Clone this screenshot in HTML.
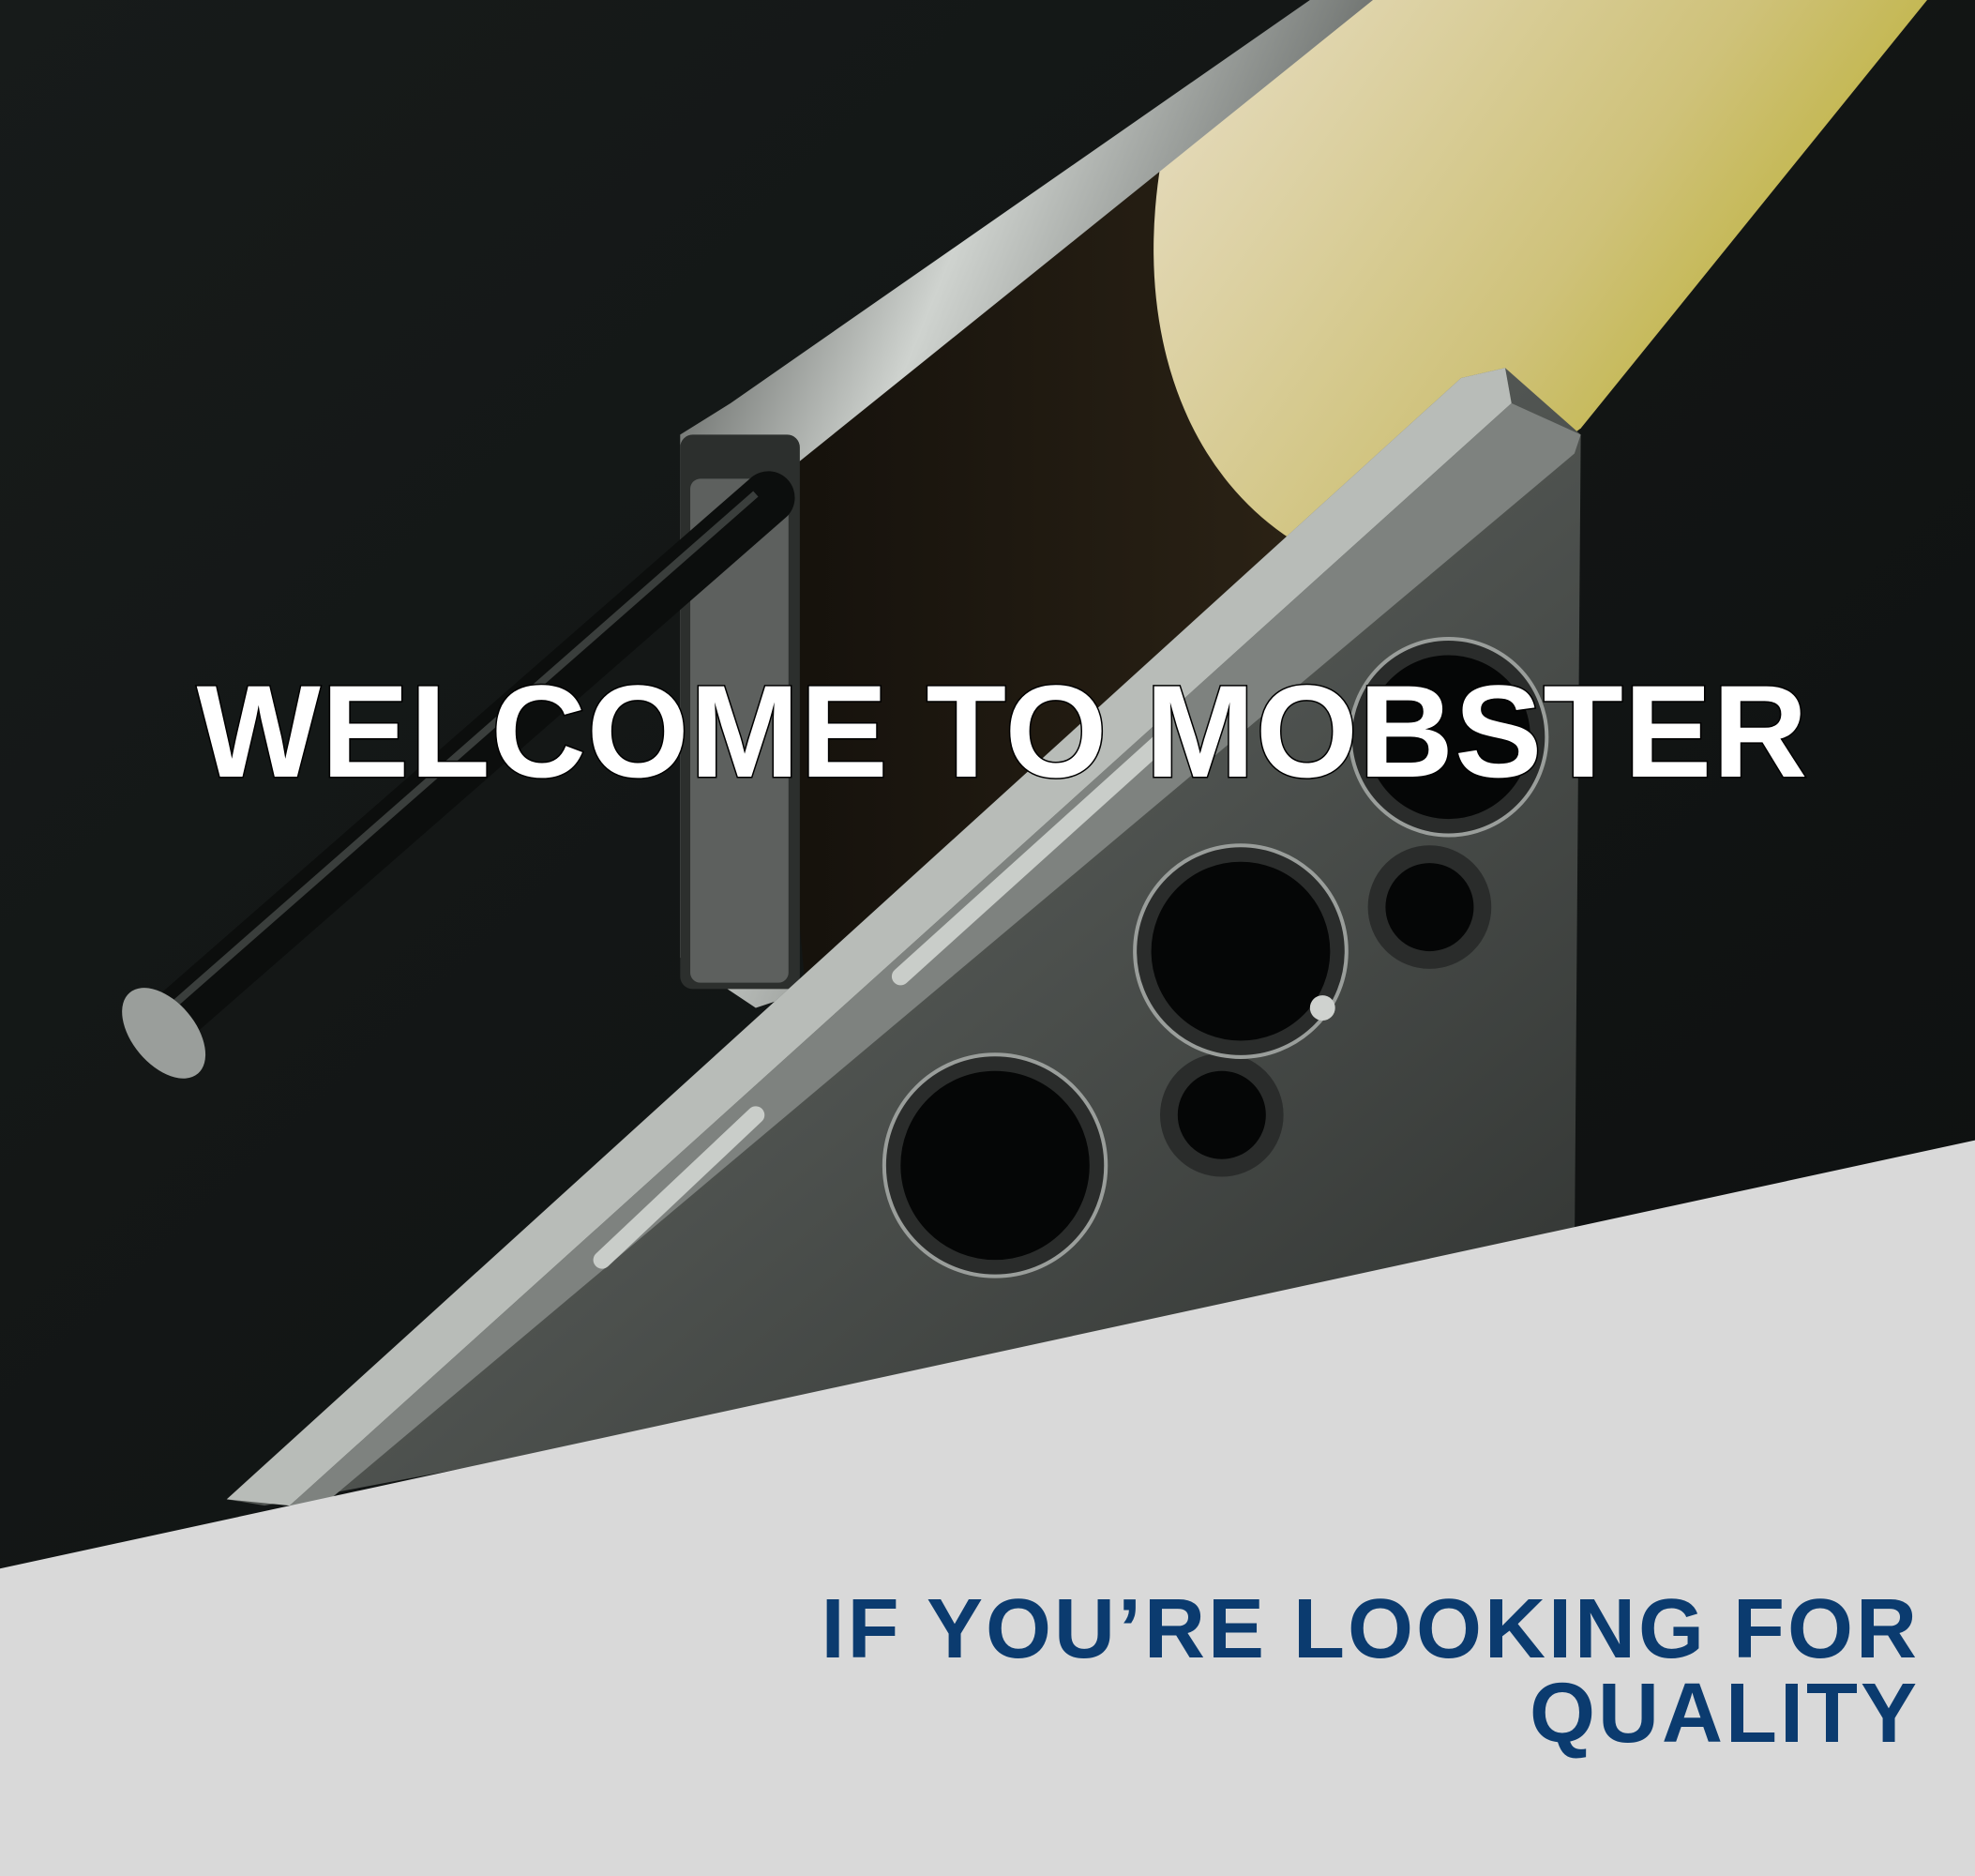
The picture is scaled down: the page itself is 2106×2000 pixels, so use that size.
<!DOCTYPE html>
<html><head><meta charset="utf-8"><style>
html,body{margin:0;padding:0;width:2106px;height:2000px;overflow:hidden;background:#141817}
svg{position:absolute;left:0;top:0}
.t1{position:absolute;left:0;width:2138px;text-align:center;top:710px;font:bold 140px/1 "Liberation Sans",sans-serif;color:#fff;letter-spacing:1px;-webkit-text-stroke:3px #000;paint-order:stroke fill;white-space:nowrap}
.t2{position:absolute;right:59px;top:1692px;text-align:right;font:bold 90px/90px "Liberation Sans",sans-serif;color:#0b3b6f;letter-spacing:3px;white-space:nowrap}
</style></head><body>
<svg width="2106" height="2000" viewBox="0 0 1568 1489" preserveAspectRatio="none">
<defs>
<linearGradient id="bg" x1="0" y1="0" x2="1" y2="1"><stop offset="0" stop-color="#171b1a"/><stop offset="1" stop-color="#0d0f0f"/></linearGradient>
<linearGradient id="yel" x1="0" y1="0" x2="1" y2="0"><stop offset="0" stop-color="#e6dcc0"/><stop offset="0.6" stop-color="#cfc27a"/><stop offset="1" stop-color="#b9ae2c"/></linearGradient>
<linearGradient id="rail" x1="0" y1="0" x2="1" y2="0.6"><stop offset="0" stop-color="#2a2d2b"/><stop offset="0.4" stop-color="#cfd3cf"/><stop offset="0.7" stop-color="#7d817e"/><stop offset="1" stop-color="#1f2220"/></linearGradient>
<linearGradient id="body" x1="0" y1="0" x2="1" y2="1"><stop offset="0" stop-color="#6f7370"/><stop offset="0.5" stop-color="#505451"/><stop offset="1" stop-color="#2e312f"/></linearGradient>
<linearGradient id="scr" x1="0" y1="0" x2="1" y2="0"><stop offset="0" stop-color="#0e0c09"/><stop offset="1" stop-color="#4a3a22"/></linearGradient>
<clipPath id="sc"><polygon points="600,360 1070,0 1530,0 1255,340 640,790"/></clipPath>
</defs>
<rect width="1568" height="1489" fill="url(#bg)"/>
<g clip-path="url(#sc)">
<rect x="500" y="0" width="1100" height="800" fill="url(#scr)"/>
<ellipse cx="1260" cy="80" rx="300" ry="420" transform="rotate(35 1260 80)" fill="url(#yel)"/>
</g>
<polygon points="540,345 580,320 1040,0 1090,0 630,370 630,790 600,800 540,760" fill="url(#rail)"/>
<rect x="540" y="345" width="95" height="440" rx="10" fill="#2c2f2d"/>
<rect x="548" y="380" width="78" height="400" rx="8" fill="#8e928f" opacity="0.5"/>
<line x1="135" y1="810" x2="610" y2="395" stroke="#0c0e0d" stroke-width="42" stroke-linecap="round"/>
<line x1="135" y1="800" x2="600" y2="392" stroke="#3a3e3c" stroke-width="6"/>
<ellipse cx="130" cy="820" rx="25" ry="42" transform="rotate(-40 130 820)" fill="#9a9e9b"/>
<polygon points="1160,300 1195,292 1255,345 1250,1000 210,1195 180,1190" fill="url(#body)"/>
<polygon points="1160,300 1195,292 1200,320 230,1195 180,1190" fill="#b8bcb8"/>
<polygon points="1200,320 1255,345 1250,360 250,1200 230,1195" fill="#7e827f"/>
<line x1="715" y1="775" x2="920" y2="590" stroke="#c9cdc9" stroke-width="14" stroke-linecap="round"/>
<line x1="478" y1="1000" x2="600" y2="885" stroke="#c9cdc9" stroke-width="14" stroke-linecap="round"/>
<g stroke="#2a2c2b" stroke-width="14" fill="#050606">
<circle cx="790" cy="925" r="82"/><circle cx="985" cy="755" r="78"/><circle cx="1150" cy="585" r="72"/>
<circle cx="1135" cy="720" r="42"/><circle cx="970" cy="885" r="42"/></g>
<g fill="none" stroke="#9a9e9b" stroke-width="3">
<circle cx="790" cy="925" r="88"/><circle cx="985" cy="755" r="84"/><circle cx="1150" cy="585" r="78"/></g>
<circle cx="1050" cy="800" r="10" fill="#cfd2cf"/>
<polygon points="0,1245 1568,905 1568,1489 0,1489" fill="#d9d9d9"/>
</svg>
<div class="t1">WELCOME TO MOBSTER</div>
<div class="t2">IF YOU’RE LOOKING FOR<br>QUALITY</div>
</body></html>
